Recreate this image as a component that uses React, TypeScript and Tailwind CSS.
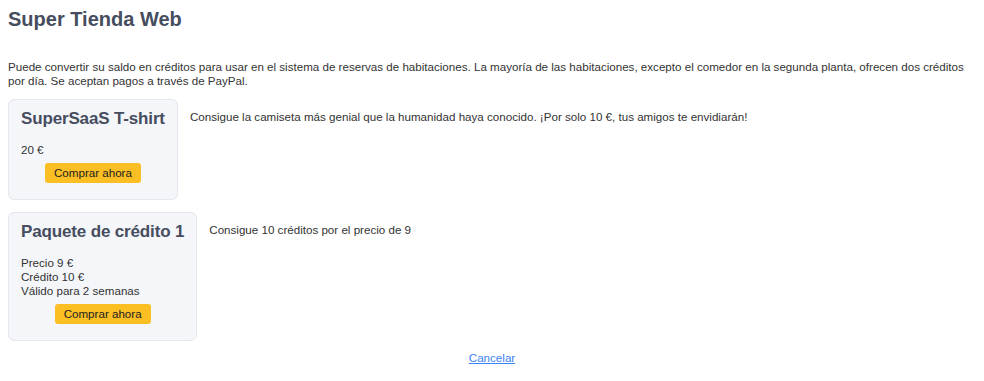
import React from "react";

function Card({
  title,
  lines,
  desc,
}: {
  title: string;
  lines: string[];
  desc: string;
}) {
  return (
    <div className="flex items-start gap-3">
      <div className="flex flex-col rounded-md border border-[#e4e7ec] bg-[#f4f6fa] px-3 pt-[9px] pb-4">
        <div className="text-[17px] leading-[20px] font-bold text-[#464d5e] whitespace-nowrap tracking-[-0.15px]">
          {title}
        </div>
        <div className="mt-[14px] text-[11.6px] leading-[14px] text-[#333]">
          {lines.map((l) => (
            <div key={l}>{l}</div>
          ))}
        </div>
        <div className="mt-[6px] flex justify-center">
          <button className="h-5 rounded-[3px] bg-[#fbbf24] px-[9px] text-[11.6px] leading-5 text-[#222]">
            Comprar ahora
          </button>
        </div>
      </div>
      <div className="mt-[11px] text-[11.6px] leading-[14px] text-[#333]">{desc}</div>
    </div>
  );
}

export default function App() {
  return (
    <div
      className="min-h-[381px] bg-white px-2 pt-[7px]"
      style={{ fontFamily: '"Liberation Sans", Arial, sans-serif' }}
    >
      <h1 className="text-[20px] leading-[24px] font-bold text-[#464d5e]">Super Tienda Web</h1>
      <p className="mt-[29px] text-[11.6px] leading-[14px] text-[#333]">
        Puede convertir su saldo en créditos para usar en el sistema de reservas de habitaciones. La
        mayoría de las habitaciones, excepto el comedor en la segunda planta, ofrecen dos créditos
        por día. Se aceptan pagos a través de PayPal.
      </p>
      <div className="mt-[11px] flex flex-col gap-3">
        <Card
          title="SuperSaaS T-shirt"
          lines={["20 €"]}
          desc="Consigue la camiseta más genial que la humanidad haya conocido. ¡Por solo 10 €, tus amigos te envidiarán!"
        />
        <Card
          title="Paquete de crédito 1"
          lines={["Precio 9 €", "Crédito 10 €", "Válido para 2 semanas"]}
          desc="Consigue 10 créditos por el precio de 9"
        />
      </div>
      <div className="mt-[10px] text-center text-[11.6px] leading-[14px]">
        <a href="#" className="text-[#3b82f6] underline">
          Cancelar
        </a>
      </div>
    </div>
  );
}
